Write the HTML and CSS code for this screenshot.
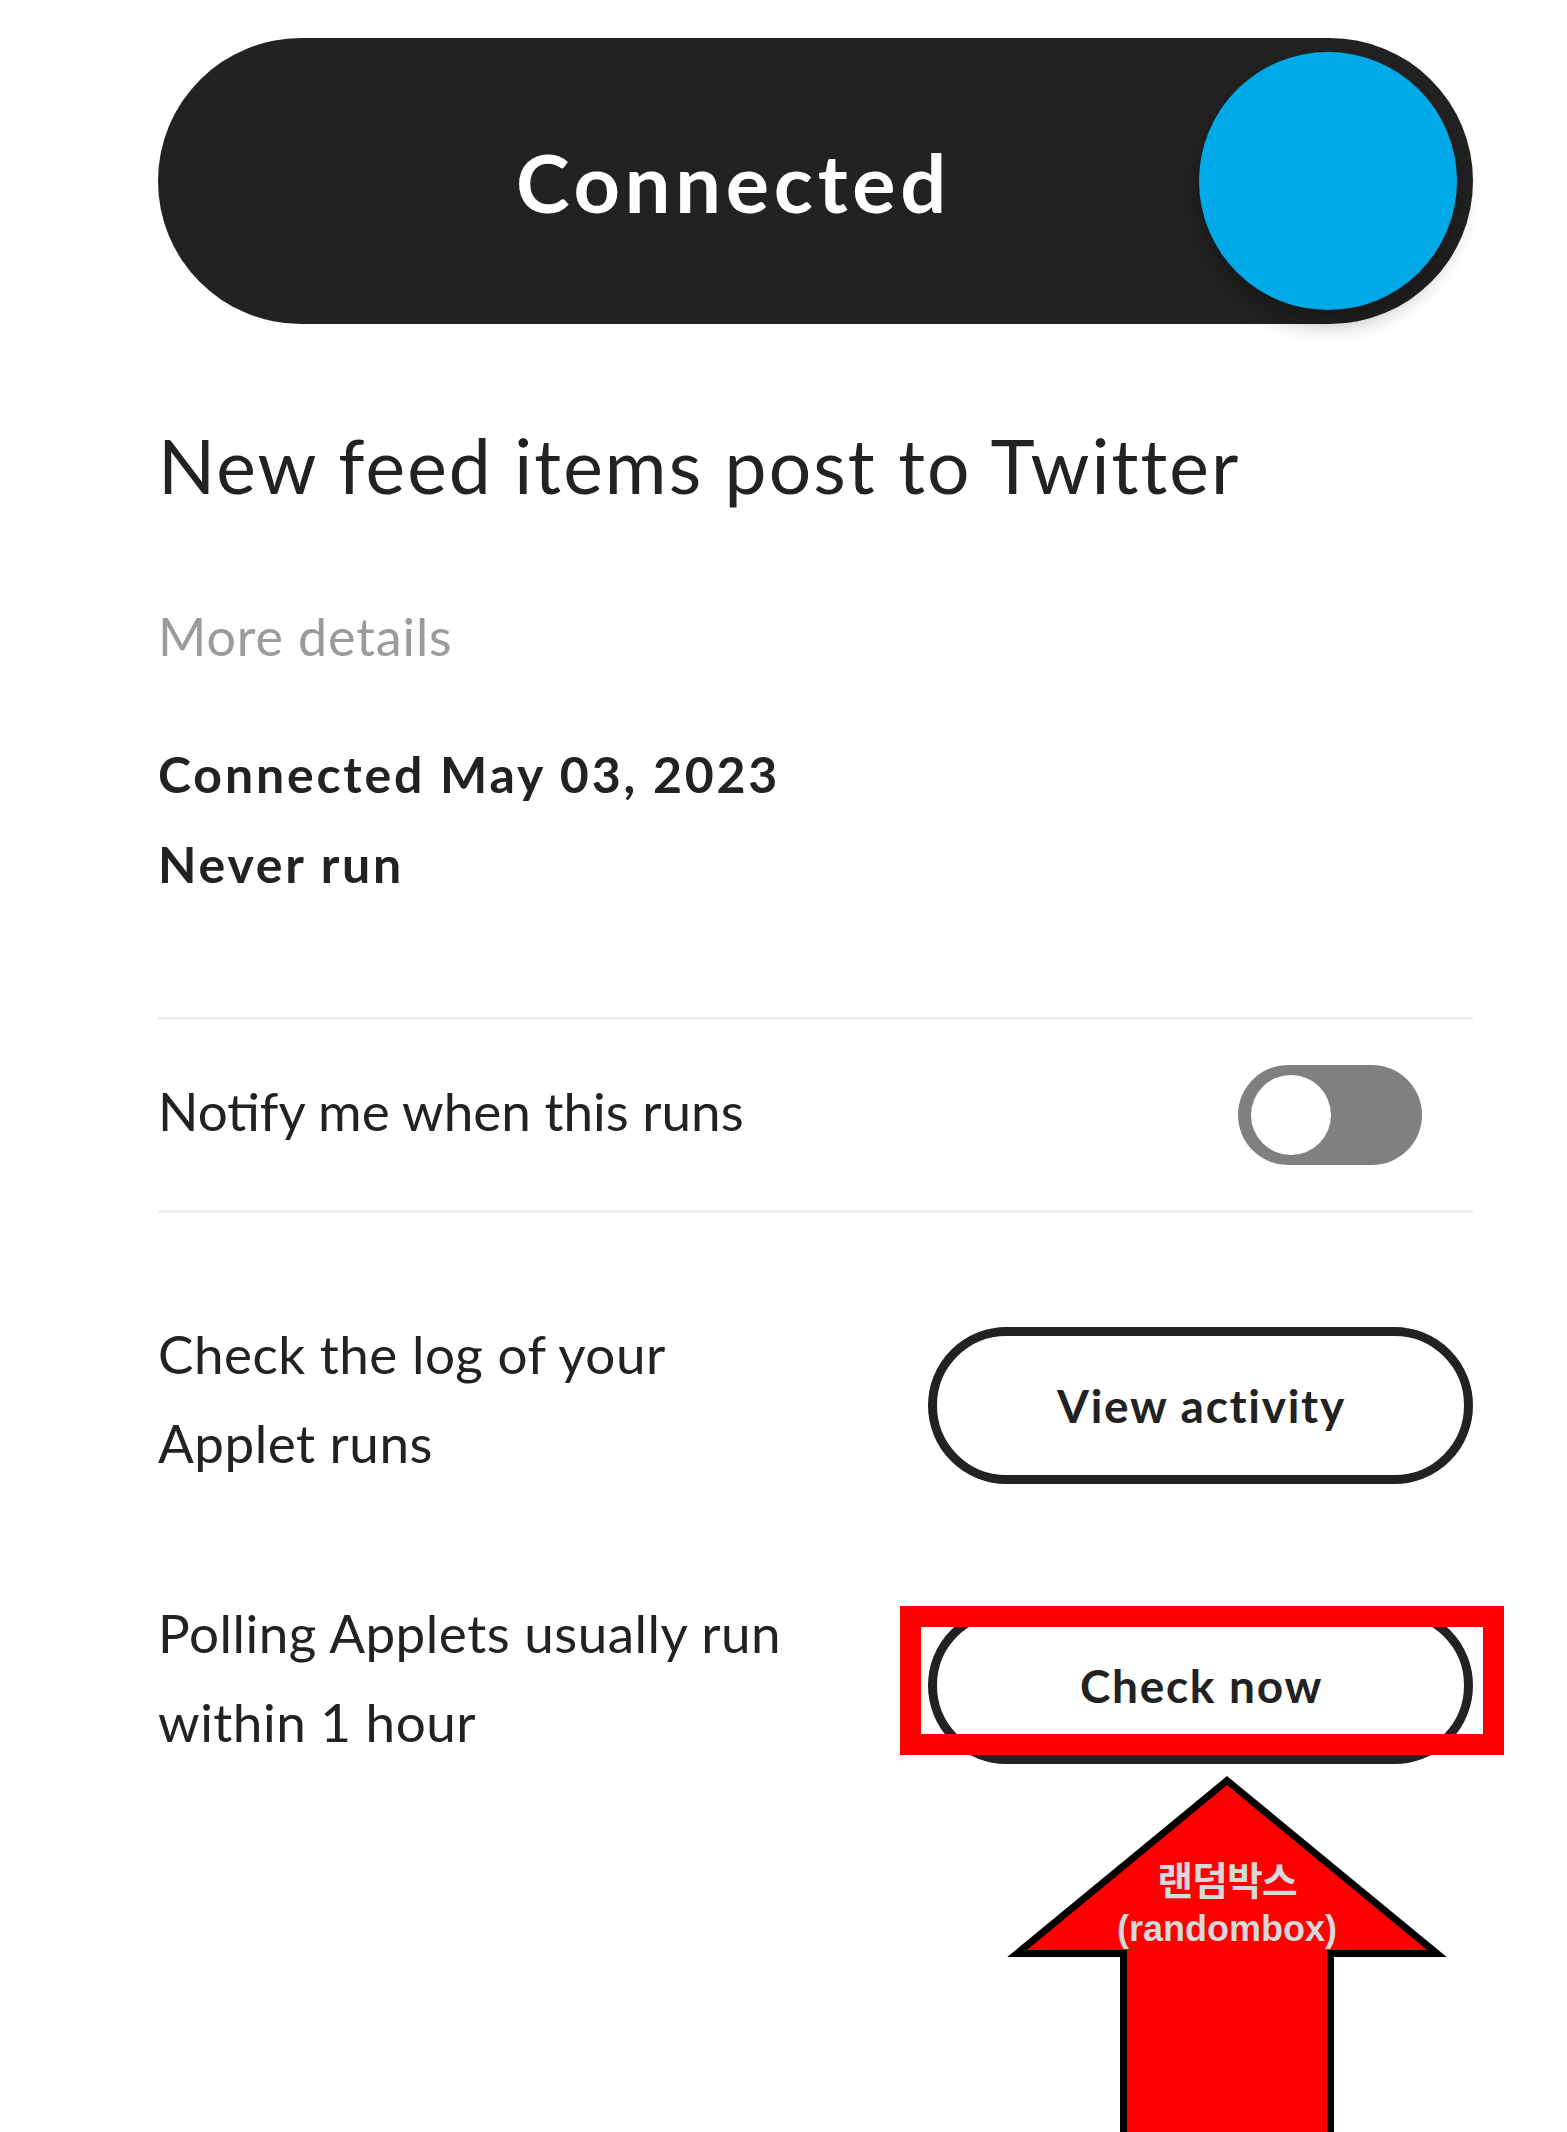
FILE: index.html
```html
<!DOCTYPE html>
<html lang="en">
<head>
<meta charset="utf-8">
<title>Applet</title>
<link rel="stylesheet" href="styles.css">
</head>
<body>
<div class="page">
  <div class="hero">
    <span class="hero-label">Connected</span>
    <span class="hero-knob"></span>
  </div>

  <h1 class="title">New feed items post to Twitter</h1>
  <p class="more">More details</p>

  <div class="meta">
    <p class="meta-line">Connected May 03, 2023</p>
    <p class="meta-line">Never run</p>
  </div>

  <div class="notify">
    <span class="notify-text">Notify me when this runs</span>
    <span class="toggle"><span class="toggle-knob"></span></span>
  </div>

  <div class="action action-first">
    <p class="action-text">Check the log of your Applet runs</p>
    <div class="btn-wrap">
      <button class="pill-btn" type="button">View activity</button>
    </div>
  </div>

  <div class="action action-second">
    <p class="action-text">Polling Applets usually run within 1 hour</p>
    <div class="btn-wrap">
      <button class="pill-btn" type="button">Check now</button>
      <span class="highlight"></span>
    </div>
  </div>

  <div class="callout">
    <svg class="callout-arrow" width="440" height="360" viewBox="0 0 440 360" aria-hidden="true">
      <polygon points="220,8.6 430,181.5 323.5,181.5 323.5,380 116.5,380 116.5,181.5 10,181.5" fill="#ff0000" stroke="#000000" stroke-width="7" stroke-linejoin="miter"/>
    </svg>
    <div class="callout-label"><span class="callout-ko">랜덤박스</span><br>(randombox)</div>
  </div>
</div>
</body>
</html>
```

FILE: styles.css
```css
html, body {
  margin: 0;
  padding: 0;
  background: #ffffff;
}

body {
  font-family: "Lato", "Noto Sans", sans-serif;
  color: #222222;
}

.page {
  position: relative;
  box-sizing: border-box;
  width: 1567px;
  height: 2132px;
  overflow: hidden;
  padding: 38px 94px 0 158px;
}

/* Connected pill */
.hero {
  box-sizing: border-box;
  height: 286px;
  border-radius: 143px;
  background: #222222;
  display: flex;
  align-items: center;
  padding: 14px 16px 14px 14px;
}

.hero-label {
  flex: 1;
  text-align: center;
  padding-left: 96px;
  color: #ffffff;
  font-weight: 700;
  font-size: 81px;
  line-height: 1;
  letter-spacing: 4.8px;
}

.hero-knob {
  width: 258px;
  height: 258px;
  border-radius: 50%;
  background: #00a9e8;
  box-shadow: 0 12px 24px rgba(0, 0, 0, 0.35);
}

/* Title block */
.title {
  margin: 96px 0 0;
  font-size: 75px;
  line-height: 90px;
  font-weight: 400;
  letter-spacing: 2.1px;
  color: #222222;
}

.more {
  margin: 81px 0 0;
  font-size: 52px;
  line-height: 90px;
  letter-spacing: 0.9px;
  color: #9b9b9b;
}

.meta {
  margin-top: 48px;
}

.meta-line {
  margin: 0;
  font-size: 50px;
  line-height: 90px;
  font-weight: 700;
  letter-spacing: 2.8px;
}

/* Notify row */
.notify {
  margin-top: 108px;
  height: 196px;
  box-sizing: border-box;
  border-top: 3px solid #eeeeee;
  border-bottom: 3px solid #eeeeee;
  display: flex;
  align-items: center;
  justify-content: space-between;
}

.notify-text {
  font-size: 53px;
  line-height: 90px;
  margin-bottom: 9px;
}

.toggle {
  box-sizing: border-box;
  width: 184px;
  height: 100px;
  border-radius: 50px;
  background: #808080;
  padding: 10px 13px;
  margin-right: 51px;
  display: flex;
  align-items: center;
}

.toggle-knob {
  width: 80px;
  height: 80px;
  border-radius: 50%;
  background: #ffffff;
}

/* Action rows */
.action {
  display: flex;
  justify-content: space-between;
  align-items: flex-start;
}

.action-first {
  padding-top: 96px;
}

.action-second {
  padding-top: 101px;
}

.action-text {
  margin: 0;
  width: 650px;
  font-size: 53px;
  line-height: 89px;
  letter-spacing: 0.5px;
}

.btn-wrap {
  position: relative;
  margin-top: 18px;
}

.action-second .btn-wrap {
  margin-top: 19px;
}

.pill-btn {
  box-sizing: border-box;
  width: 545px;
  height: 157px;
  border: 9px solid #222222;
  border-radius: 80px;
  background: #ffffff;
  color: #222222;
  font-family: "Lato", "Noto Sans", sans-serif;
  font-weight: 700;
  font-size: 46px;
  letter-spacing: 1.7px;
  padding: 0 0 0 2px;
  display: block;
}

.highlight {
  position: absolute;
  left: -28px;
  top: -1px;
  width: 604px;
  height: 149px;
  box-sizing: border-box;
  border: 21px solid #ff0000;
}

/* Annotation arrow */
.callout {
  position: absolute;
  left: 1007px;
  top: 1772px;
  width: 440px;
  height: 360px;
}

.callout-arrow {
  display: block;
}

.callout-label {
  position: absolute;
  left: 0;
  top: 83px;
  width: 440px;
  text-align: center;
  font-family: "Liberation Sans", "Noto Sans CJK KR", sans-serif;
  font-weight: 700;
  font-size: 36px;
  line-height: 46px;
  color: #d9d9d9;
}

.callout-ko {
  font-family: "Noto Sans CJK KR", sans-serif;
  font-size: 39px;
  line-height: 46px;
  letter-spacing: -1px;
}
```
